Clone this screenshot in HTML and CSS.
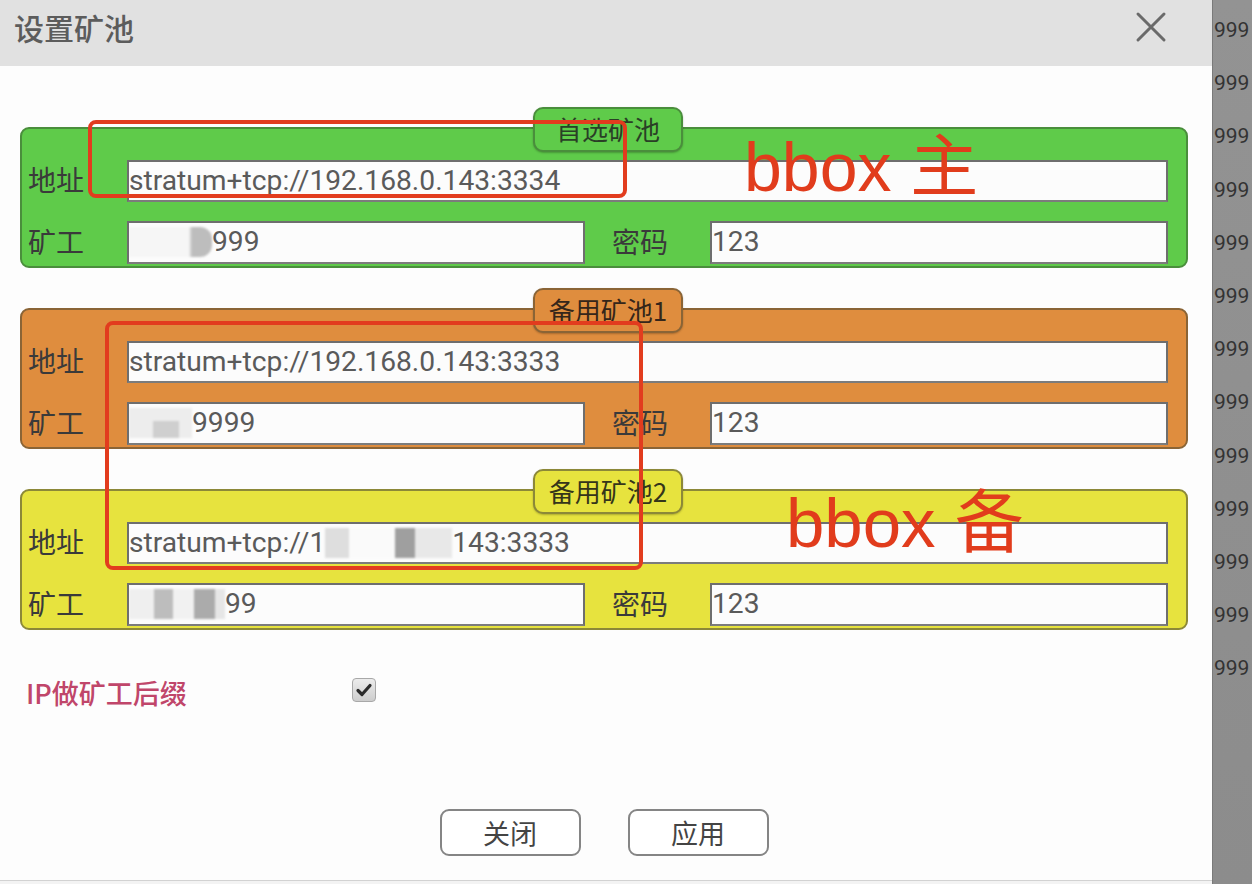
FILE: index.html
```html
<!DOCTYPE html>
<html lang="zh-CN">
<head>
<meta charset="utf-8">
<title>设置矿池</title>
<link rel="stylesheet" href="styles.css">
</head>
<body>
<div class="screen">
  <div class="dialog">
    <header class="dlg-head">
      <h1 class="dlg-title">设置矿池</h1>
      <svg class="dlg-close" width="32" height="32" viewBox="0 0 32 32" aria-label="关闭">
        <path d="M3 3 L29 29 M29 3 L3 29" stroke="#6a6a6a" stroke-width="3" fill="none" stroke-linecap="round"/>
      </svg>
    </header>

    <main class="dlg-body">
      <section class="pool pool-green">
        <div class="pool-legend">首选矿池</div>
        <div class="pool-grid">
          <span class="lbl">地址</span>
          <div class="field field-wide">stratum+tcp://192.168.0.143:3334</div>
          <span class="lbl">矿工</span>
          <div class="field"><span class="mask mask-g"></span>999</div>
          <span class="lbl lbl-pw">密码</span>
          <div class="field">123</div>
        </div>
      </section>

      <section class="pool pool-orange">
        <div class="pool-legend">备用矿池1</div>
        <div class="pool-grid">
          <span class="lbl">地址</span>
          <div class="field field-wide">stratum+tcp://192.168.0.143:3333</div>
          <span class="lbl">矿工</span>
          <div class="field"><span class="mask mask-o"></span>9999</div>
          <span class="lbl lbl-pw">密码</span>
          <div class="field">123</div>
        </div>
      </section>

      <section class="pool pool-yellow">
        <div class="pool-legend">备用矿池2</div>
        <div class="pool-grid">
          <span class="lbl">地址</span>
          <div class="field field-wide">stratum+tcp://1<span class="mask mask-addr"></span>143:3333</div>
          <span class="lbl">矿工</span>
          <div class="field"><span class="mask mask-y"></span>99</div>
          <span class="lbl lbl-pw">密码</span>
          <div class="field">123</div>
        </div>
      </section>

      <div class="option-row">
        <span class="opt-label">IP做矿工后缀</span>
        <span class="chk">
          <svg width="18" height="18" viewBox="0 0 18 18"><path d="M3 9.5 L7 13.5 L15 4.5" stroke="#2b2b2b" stroke-width="3.2" fill="none" stroke-linecap="round" stroke-linejoin="round"/></svg>
        </span>
      </div>

      <div class="btn-row">
        <button class="btn">关闭</button>
        <button class="btn">应用</button>
      </div>
    </main>

    <div class="mark mark-1"></div>
    <div class="mark mark-2"></div>
    <div class="anno anno-1">bbox 主</div>
    <div class="anno anno-2">bbox 备</div>
  </div>

  <aside class="side">
    <div class="side-line">999</div>
    <div class="side-line">999</div>
    <div class="side-line">999</div>
    <div class="side-line">999</div>
    <div class="side-line">999</div>
    <div class="side-line">999</div>
    <div class="side-line">999</div>
    <div class="side-line">999</div>
    <div class="side-line">999</div>
    <div class="side-line">999</div>
    <div class="side-line">999</div>
    <div class="side-line">999</div>
    <div class="side-line">999</div>
  </aside>
</div>
</body>
</html>
```

FILE: styles.css
```css
* { box-sizing: border-box; }

html, body {
  margin: 0;
  padding: 0;
  width: 1252px;
  height: 884px;
  overflow: hidden;
  background: #8e8e8e;
  font-family: "Noto Sans CJK SC", "Noto Sans", sans-serif;
}

.screen {
  display: flex;
  width: 1252px;
  height: 884px;
}

.dialog {
  position: relative;
  width: 1212px;
  height: 884px;
  flex: none;
  background: #fdfdfd;
  display: flex;
  flex-direction: column;
  box-shadow: inset 0 -3px 0 #f3f3f3, inset 0 -4px 0 #d2d2d2;
}

.dlg-head {
  height: 66px;
  flex: none;
  background: #e1e1e1;
  display: flex;
  justify-content: space-between;
  align-items: flex-start;
  padding: 0 45px 0 14px;
}

.dlg-title {
  margin: 9px 0 0;
  font-size: 30px;
  line-height: 36px;
  font-weight: 500;
  color: #5c5c5c;
}

.dlg-close {
  margin-top: 11px;
}

.dlg-body {
  flex: 1;
  display: flex;
  flex-direction: column;
  padding: 0 24px 0 20px;
}

.pool {
  border: 2px solid;
  border-radius: 9px;
  padding: 0 18px 2px 6px;
  margin-top: 40px;
}
.pool:first-child { margin-top: 61px; }

.pool-green  { background: #5fcb4a; border-color: #4a8e3c; }
.pool-orange { background: #df8d3e; border-color: #8a6436; }
.pool-yellow { background: #e7e33e; border-color: #8c8838; }

.pool-legend {
  width: 150px;
  height: 45px;
  margin: -22px auto 0;
  position: relative;
  left: 10px;
  border: 2px solid;
  border-radius: 10px;
  text-align: center;
  font-size: 26px;
  line-height: 40px;
  color: #333;
  box-shadow: 0 1px 2px rgba(0,0,0,0.25);
}
.pool-green .pool-legend  { background: #5fcb4a; border-color: #4a8e3c; color: #2a3f26; }
.pool-orange .pool-legend { background: #df8d3e; border-color: #8a6436; color: #35261a; }
.pool-yellow .pool-legend { background: #e7e33e; border-color: #8c8838; color: #35351a; }

.pool-grid {
  margin-top: 8px;
  display: grid;
  grid-template-columns: 99px 1fr 125px 1fr;
  grid-template-rows: 42px 43px;
  row-gap: 19px;
  align-items: center;
}

.lbl {
  font-size: 28px;
  line-height: 36px;
  margin-top: -4px;
  color: #3a3a3a;
}
.lbl-pw { padding-left: 27px; }

.field {
  height: 100%;
  background: #fcfcfc;
  border: 2px solid #6e6e6e;
  border-bottom-color: #7c7c7c;
  padding-left: 0;
  font-family: Roboto, "Noto Sans", sans-serif;
  font-size: 28.2px;
  line-height: 37px;
  color: #5a5a5a;
  white-space: nowrap;
  overflow: hidden;
}
.field-wide { grid-column: 2 / 5; }

.mask {
  display: inline-block;
  height: 30px;
  vertical-align: -6px;
  filter: blur(1.2px);
}
.mask-g {
  width: 83px;
  background: linear-gradient(90deg, #f6f6f6 0 72%, #bdbdbd 76% 100%);
  border-radius: 0 12px 12px 0;
}
.mask-o {
  width: 63px;
  background:
    linear-gradient(180deg, transparent 0 45%, #cfcfcf 45% 100%) 24px 0 / 26px 100% no-repeat,
    #ededed;
}
.mask-y {
  width: 96px;
  background: linear-gradient(90deg, #efefef 0 26%, #bdbdbd 26% 46%, #f1f1f1 46% 68%, #ababab 68% 90%, #e6e6e6 90%);
}
.mask-addr {
  width: 127px;
  background: linear-gradient(90deg, #dedede 0 19%, #fafafa 19% 55%, #9f9f9f 55% 71%, #e8e8e8 71% 100%);
}

.option-row {
  margin-top: 45px;
  height: 30px;
  display: flex;
  align-items: center;
  padding-left: 6px;
}
.opt-label {
  width: 326px;
  font-size: 27px;
  line-height: 30px;
  margin-top: 6px;
  font-weight: 500;
  color: #c0466a;
}
.chk {
  width: 24px;
  height: 24px;
  border: 1px solid #a8a8a8;
  border-radius: 4px;
  background: linear-gradient(180deg, #ececec, #cdcdcd);
  display: flex;
  align-items: center;
  justify-content: center;
}

.btn-row {
  margin-top: 104px;
  display: flex;
  justify-content: center;
  gap: 47px;
}
.btn {
  width: 141px;
  height: 47px;
  border: 2px solid #858585;
  border-radius: 9px;
  background: #fff;
  font-family: "Noto Sans CJK SC", sans-serif;
  font-size: 27px;
  line-height: 40px;
  color: #444;
  padding: 0;
}

.mark {
  position: absolute;
  border: 4px solid #e23c1e;
  border-radius: 8px;
}
.mark-1 { left: 88px; top: 120px; width: 539px; height: 78px; }
.mark-2 { left: 105px; top: 321px; width: 538px; height: 249px; }

.anno {
  position: absolute;
  font-family: "Liberation Sans", "Noto Sans CJK SC", sans-serif;
  font-size: 68px;
  line-height: 68px;
  color: #e13c1c;
  white-space: nowrap;
}
.anno-1 { left: 744px; top: 133px; }
.anno-2 { left: 786px; top: 490px; font-size: 69px; }

.side {
  width: 40px;
  flex: none;
  background: linear-gradient(180deg, #939393 0, #8c8c8c 100%);
  border-left: 1px solid #7a7a7a;
  overflow: hidden;
  padding-top: 4px;
}
.side-line {
  padding-left: 1px;
  height: 53.2px;
  line-height: 53.2px;
  font-family: Roboto, sans-serif;
  font-size: 21px;
  color: #333;
  white-space: nowrap;
}
```
